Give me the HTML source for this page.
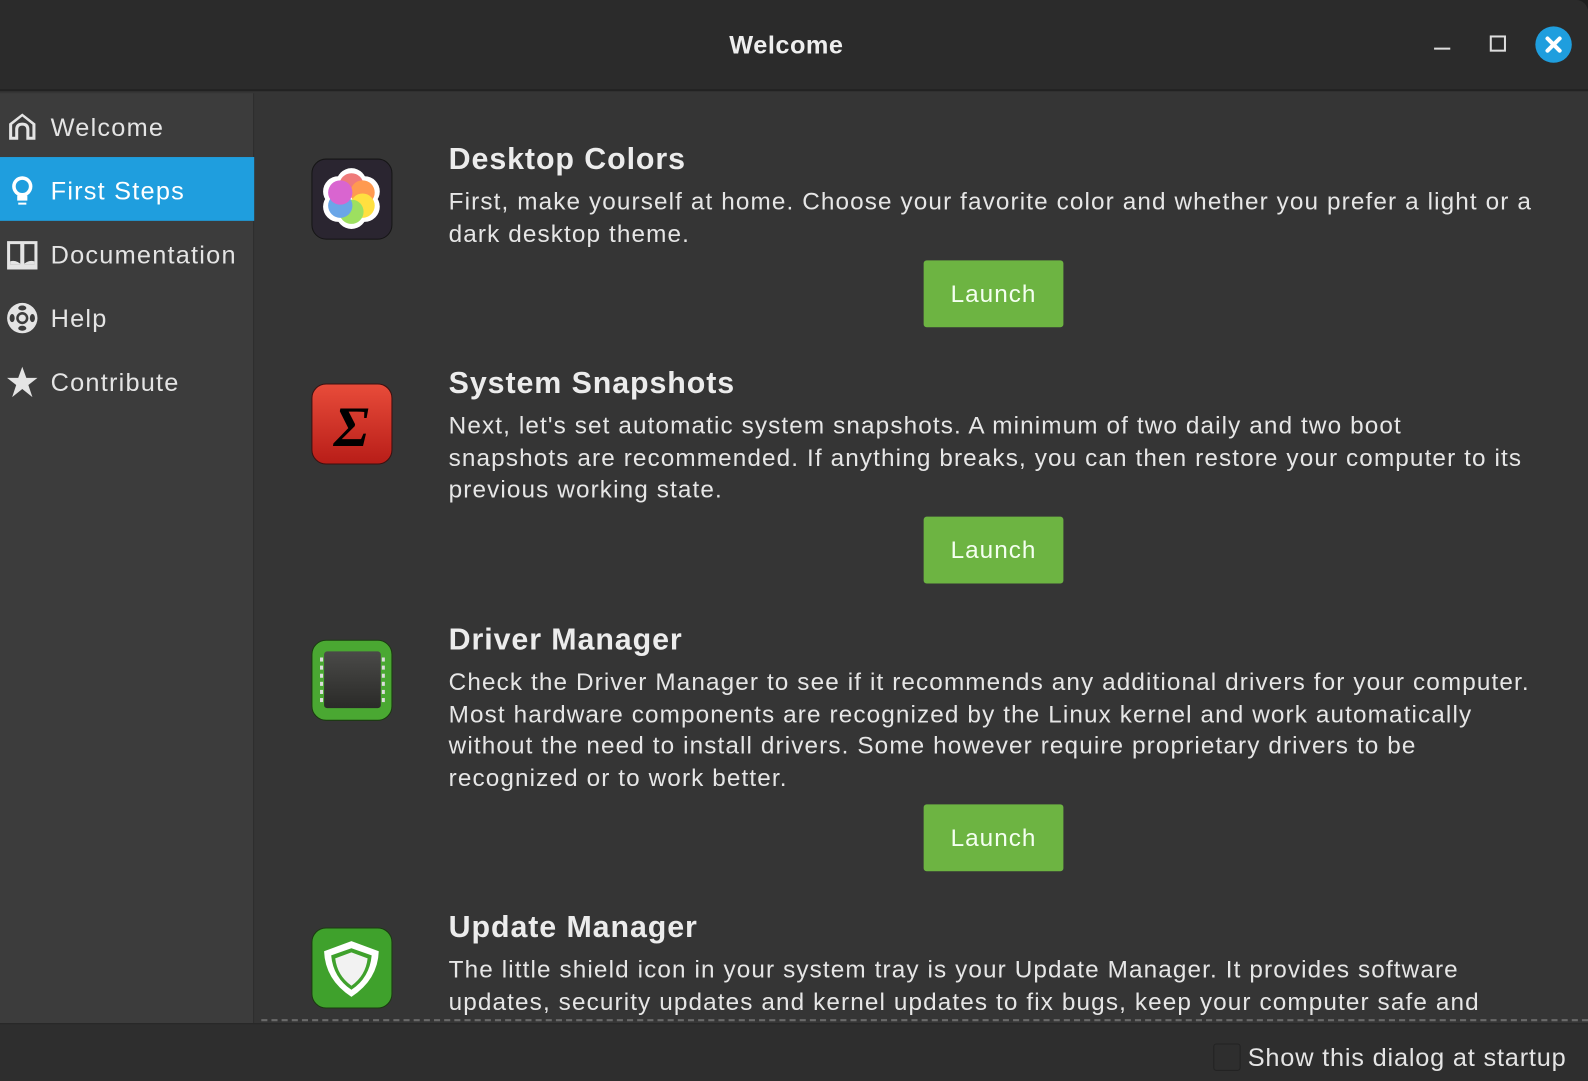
<!DOCTYPE html>
<html><head><meta charset="utf-8"><style>
*{margin:0;padding:0;box-sizing:border-box}
html,body{width:1588px;height:1081px;overflow:hidden;background:#1e1e1e}
#w{position:absolute;left:0;top:0;width:1568px;height:1067px;transform:scale(1.01276,1.0131);transform-origin:0 0;font-family:"Liberation Sans",sans-serif;color:#e6e6e6;background:#353535;border-top-right-radius:12px;overflow:hidden}
#tb{position:absolute;left:0;top:0;width:1568px;height:90px;background:#2b2b2b;border-bottom:2px solid #222}
#tb .t{position:absolute;left:0;width:1553px;text-align:center;top:31px;font-size:25px;font-weight:bold;color:#eee;letter-spacing:0.5px}
#side{position:absolute;left:0;top:92px;width:251px;height:918px;background:#3c3c3c;border-right:1px solid #2c2c2c}
.it{position:absolute;left:0;width:251px;height:63px;font-size:25px;line-height:69px;padding-left:50px;color:#e4e4e4;letter-spacing:1.2px}
.it svg{position:absolute;left:6px;top:17px}
.sel{background:#1f9ede;color:#fff}
.ic{position:absolute;left:307px;width:81px;height:81px}
.h{position:absolute;left:443px;font-size:30px;font-weight:bold;color:#ececec;white-space:nowrap;letter-spacing:0.9px}
.p{position:absolute;left:443px;font-size:24px;line-height:31.7px;white-space:nowrap;color:#e6e6e6;letter-spacing:1.1px}
.b{position:absolute;left:912px;width:138px;height:66px;background:#6db442;border-radius:3px;font-size:24px;line-height:68px;text-align:center;color:#f4fff0;letter-spacing:1px}
#bot{position:absolute;left:0;top:1010px;width:1568px;height:57px;background:#2e2e2e;border-top:1px solid #262626}
#dash{position:absolute;left:258px;top:1006px;width:1310px;border-top:2px dashed #6a6a6a}
</style></head><body><div id="w">
<div id="tb"><div class="t">Welcome</div>
<div style="position:absolute;left:1416px;top:47px;width:16px;height:2px;background:#ddd"></div>
<div style="position:absolute;left:1471px;top:35px;width:16px;height:16px;border:2px solid #ddd"></div>
<div style="position:absolute;left:1516px;top:26px;width:36px;height:36px;border-radius:50%;background:#1f9ede"><svg width="36" height="36"><path d="M12 12L24 24M24 12L12 24" stroke="#fff" stroke-width="4" stroke-linecap="round"/></svg></div>
</div>
<div id="side">
<div class="it" style="top:0"><svg width="32" height="32"><path d="M3 29V13L16 3L29 13V29H20V19Q20 15 16 15Q12 15 12 19V29Z" fill="#e4e4e4"/><path d="M6 26V14L16 6L26 14V26H23V19Q23 12 16 12Q9 12 9 19V26Z" fill="#3c3c3c"/></svg>Welcome</div>
<div class="it sel" style="top:63px"><svg width="32" height="32"><circle cx="16" cy="12" r="10" fill="#fff"/><circle cx="16" cy="12" r="6.5" fill="#1f9ede"/><rect x="11" y="21" width="10" height="5" fill="#fff"/><rect x="12" y="28" width="8" height="2" fill="#fff"/></svg>First Steps</div>
<div class="it" style="top:126px"><svg width="32" height="32"><path d="M1 3H31V31H1Z" fill="#e4e4e4"/><path d="M4 6H14V26H4ZM18 6H28V26H18Z" fill="#3c3c3c"/><path d="M4 23Q10 21 16 27Q22 21 28 23V26H4Z" fill="#e4e4e4"/></svg>Documentation</div>
<div class="it" style="top:189px"><svg width="32" height="32"><circle cx="16" cy="16" r="15" fill="#e4e4e4"/><circle cx="16" cy="16" r="6" fill="#3c3c3c"/><circle cx="16" cy="16" r="3.5" fill="#e4e4e4"/><g fill="#3c3c3c"><ellipse cx="6" cy="16" rx="2.5" ry="4"/><ellipse cx="26" cy="16" rx="2.5" ry="4"/><ellipse cx="16" cy="6" rx="4" ry="2.5"/><ellipse cx="16" cy="26" rx="4" ry="2.5"/></g></svg>Help</div>
<div class="it" style="top:252px"><svg width="32" height="32"><path d="M16 1L20 12H31L22 19L26 31L16 23L6 31L10 19L1 12H12Z" fill="#e4e4e4"/></svg>Contribute</div>
</div>

<svg class="ic" style="top:156px" viewBox="0 0 81 81"><rect x="1" y="1" width="79" height="79" rx="14" fill="#2a2530" stroke="#151515"/>
<g fill="#fff"><circle cx="40" cy="25" r="15"/><circle cx="53" cy="33" r="15"/><circle cx="53" cy="48" r="15"/><circle cx="40" cy="55" r="15"/><circle cx="27" cy="48" r="15"/><circle cx="27" cy="33" r="15"/></g>
<circle cx="40" cy="27" r="12" fill="#ef7a7a"/><circle cx="51" cy="34" r="12" fill="#ff9a50"/><circle cx="51" cy="47" r="12" fill="#ffe040"/><circle cx="40" cy="53" r="12" fill="#9de060"/><circle cx="29" cy="47" r="12" fill="#6aa6e8"/><circle cx="29" cy="34" r="12" fill="#d965d0"/></svg>
<div class="h" style="top:141px">Desktop Colors</div>
<div class="p" style="top:184px">First, make yourself at home. Choose your favorite color and whether you prefer a light or a<br>dark desktop theme.</div>
<div class="b" style="top:257px">Launch</div>

<svg class="ic" style="top:378px" viewBox="0 0 81 81"><defs><linearGradient id="r" x1="0" y1="0" x2="0" y2="1"><stop offset="0" stop-color="#e84c3a"/><stop offset="1" stop-color="#b81d18"/></linearGradient></defs><rect x="1" y="1" width="79" height="79" rx="14" fill="url(#r)" stroke="#3a1010"/><text x="40" y="62" text-anchor="middle" font-family="Liberation Serif,serif" font-style="italic" font-weight="bold" font-size="56" fill="#000">Σ</text></svg>
<div class="h" style="top:362px">System Snapshots</div>
<div class="p" style="top:405px">Next, let's set automatic system snapshots. A minimum of two daily and two boot<br>snapshots are recommended. If anything breaks, you can then restore your computer to its<br>previous working state.</div>
<div class="b" style="top:510px">Launch</div>

<svg class="ic" style="top:631px" viewBox="0 0 81 81"><defs><linearGradient id="c" x1="0" y1="0" x2="0" y2="1"><stop offset="0" stop-color="#4a4a48"/><stop offset="1" stop-color="#2a2a28"/></linearGradient></defs><rect x="1" y="1" width="79" height="79" rx="14" fill="#4aa832" stroke="#1a3a10"/><rect x="13" y="12" width="56" height="56" rx="3" fill="url(#c)"/><g fill="#ddd"><rect x="9" y="18" width="3" height="4"/><rect x="9" y="26" width="3" height="4"/><rect x="9" y="34" width="3" height="4"/><rect x="9" y="42" width="3" height="4"/><rect x="9" y="50" width="3" height="4"/><rect x="9" y="58" width="3" height="4"/><rect x="70" y="18" width="3" height="4"/><rect x="70" y="26" width="3" height="4"/><rect x="70" y="34" width="3" height="4"/><rect x="70" y="42" width="3" height="4"/><rect x="70" y="50" width="3" height="4"/><rect x="70" y="58" width="3" height="4"/></g></svg>
<div class="h" style="top:615px">Driver Manager</div>
<div class="p" style="top:658px">Check the Driver Manager to see if it recommends any additional drivers for your computer.<br>Most hardware components are recognized by the Linux kernel and work automatically<br>without the need to install drivers. Some however require proprietary drivers to be<br>recognized or to work better.</div>
<div class="b" style="top:794px">Launch</div>

<svg class="ic" style="top:915px" viewBox="0 0 81 81"><rect x="1" y="1" width="79" height="79" rx="14" fill="#3fa12c" stroke="#1a3a10"/><path d="M40 14L67 24Q66 52 40 69Q14 52 13 24Z" fill="#fff"/><path d="M40 21L60 28Q58 50 40 62Q22 50 20 28Z" fill="#3fa12c"/><path d="M40 25L56 31Q54 48 40 58Q26 48 24 31Z" fill="#f2f2f2"/></svg>
<div class="h" style="top:899px">Update Manager</div>
<div class="p" style="top:942px">The little shield icon in your system tray is your Update Manager. It provides software<br>updates, security updates and kernel updates to fix bugs, keep your computer safe and</div>
<div id="dash"></div>
<div id="bot"><div style="position:absolute;left:1198px;top:19px;width:27px;height:27px;border:1px solid #222;border-radius:3px;background:#2e2e2e"></div><div style="position:absolute;left:1232px;top:19px;font-size:25px;color:#e4e4e4;letter-spacing:0.8px">Show this dialog at startup</div></div>
</div></body></html>
